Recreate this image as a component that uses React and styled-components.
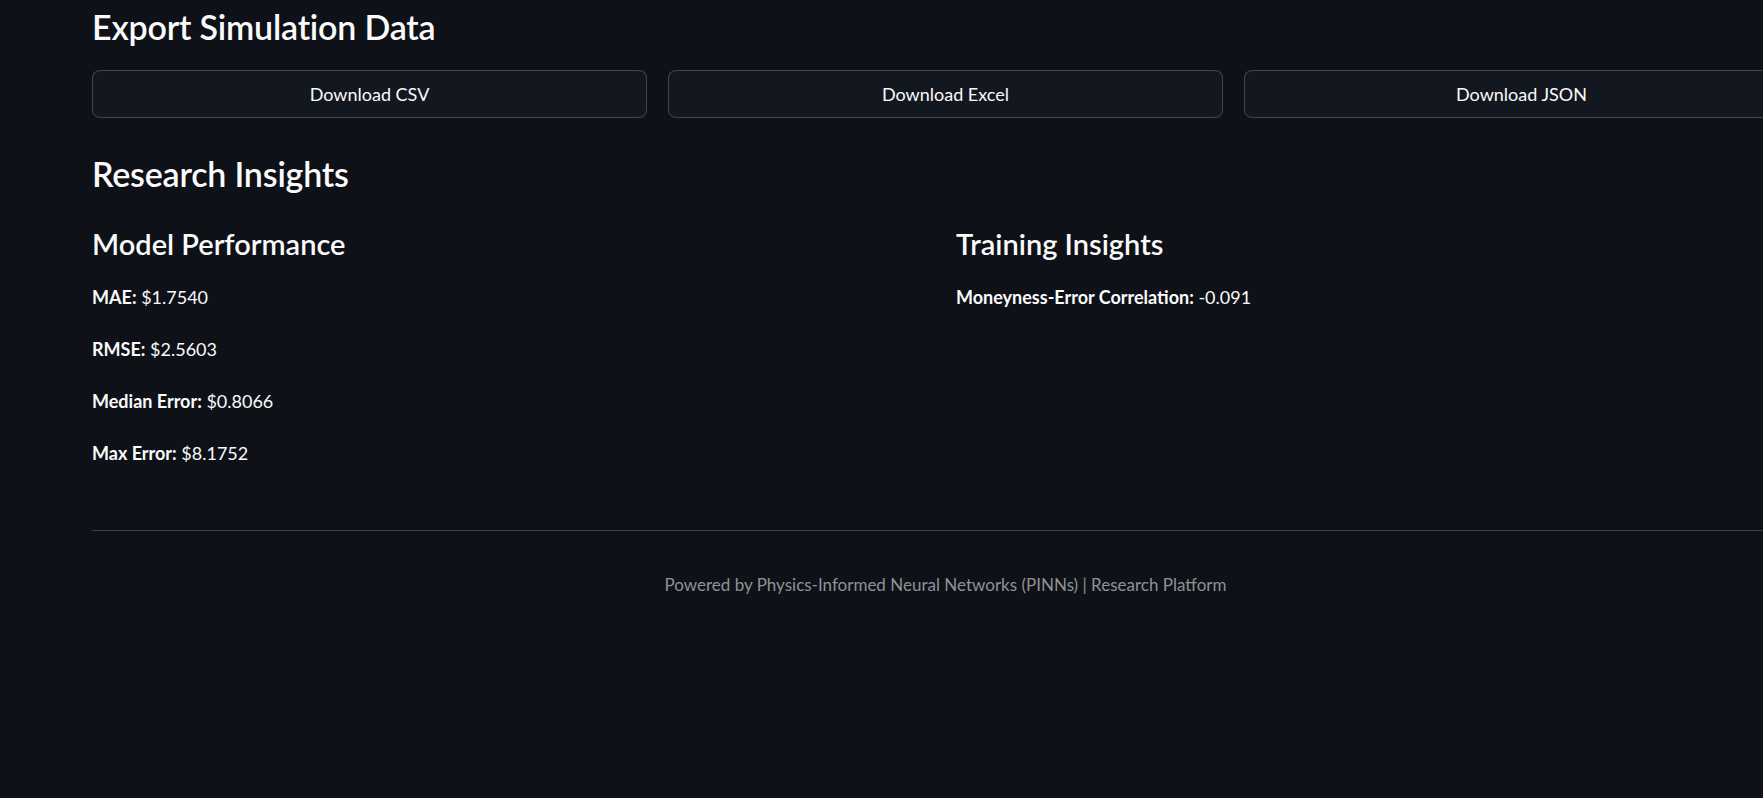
import React from 'react';
import styled, { createGlobalStyle } from 'styled-components';

const GlobalStyle = createGlobalStyle`
  html, body {
    margin: 0;
    padding: 0;
    background-color: #0e1117;
    overflow: hidden;
  }
  body {
    font-family: "Source Sans Pro", Lato, "Noto Sans", sans-serif;
    color: #fafafa;
  }
`;

const Main = styled.main`
  width: 1707px;
  padding-left: 92px;
  display: flex;
  flex-direction: column;
`;

const SectionTitle = styled.h2`
  margin: ${p => p.$top || 0}px 0 0 0;
  font-size: 34px;
  font-weight: 600;
  line-height: 54px;
  letter-spacing: -0.2px;
`;

const ButtonRow = styled.div`
  display: grid;
  grid-template-columns: repeat(3, 1fr);
  gap: 21px;
  margin-top: 16px;
`;

const DownloadButton = styled.button`
  height: 48px;
  background-color: #131720;
  border: 1px solid rgba(250, 250, 250, 0.2);
  border-radius: 8px;
  color: #fafafa;
  font-family: inherit;
  font-size: 18px;
  cursor: pointer;
  &:hover {
    border-color: #ff4b4b;
    color: #ff4b4b;
  }
`;

const Columns = styled.div`
  display: grid;
  grid-template-columns: 1fr 1fr;
  gap: 21px;
  align-items: start;
  margin-top: 21px;
`;

const Column = styled.div`
  display: flex;
  flex-direction: column;
`;

const ColumnTitle = styled.h3`
  margin: 0 0 17px 0;
  font-size: 29px;
  font-weight: 600;
  line-height: 44px;
`;

const Stat = styled.p`
  margin: 0 0 24px 0;
  font-size: 18px;
  line-height: 28px;
  &:last-child {
    margin-bottom: 0;
  }
  b {
    font-weight: 700;
  }
`;

const Divider = styled.hr`
  margin: 63px 0 0 0;
  border: none;
  border-top: 1px solid rgba(250, 250, 250, 0.2);
`;

const Footer = styled.p`
  margin: 42px 0 0 0;
  text-align: center;
  font-size: 17px;
  line-height: 24px;
  color: #8e9196;
`;

const performance = [
  { label: 'MAE', value: '$1.7540' },
  { label: 'RMSE', value: '$2.5603' },
  { label: 'Median Error', value: '$0.8066' },
  { label: 'Max Error', value: '$8.1752' },
];

const training = [
  { label: 'Moneyness-Error Correlation', value: '-0.091' },
];

const App = () => {
  return (
    <>
      <GlobalStyle />
      <Main>
        <SectionTitle>Export Simulation Data</SectionTitle>
        <ButtonRow>
          <DownloadButton>Download CSV</DownloadButton>
          <DownloadButton>Download Excel</DownloadButton>
          <DownloadButton>Download JSON</DownloadButton>
        </ButtonRow>

        <SectionTitle $top={29}>Research Insights</SectionTitle>
        <Columns>
          <Column>
            <ColumnTitle>Model Performance</ColumnTitle>
            {performance.map(s => (
              <Stat key={s.label}><b>{s.label}:</b> {s.value}</Stat>
            ))}
          </Column>
          <Column>
            <ColumnTitle>Training Insights</ColumnTitle>
            {training.map(s => (
              <Stat key={s.label}><b>{s.label}:</b> {s.value}</Stat>
            ))}
          </Column>
        </Columns>

        <Divider />
        <Footer>Powered by Physics-Informed Neural Networks (PINNs) | Research Platform</Footer>
      </Main>
    </>
  );
};

export default App;
